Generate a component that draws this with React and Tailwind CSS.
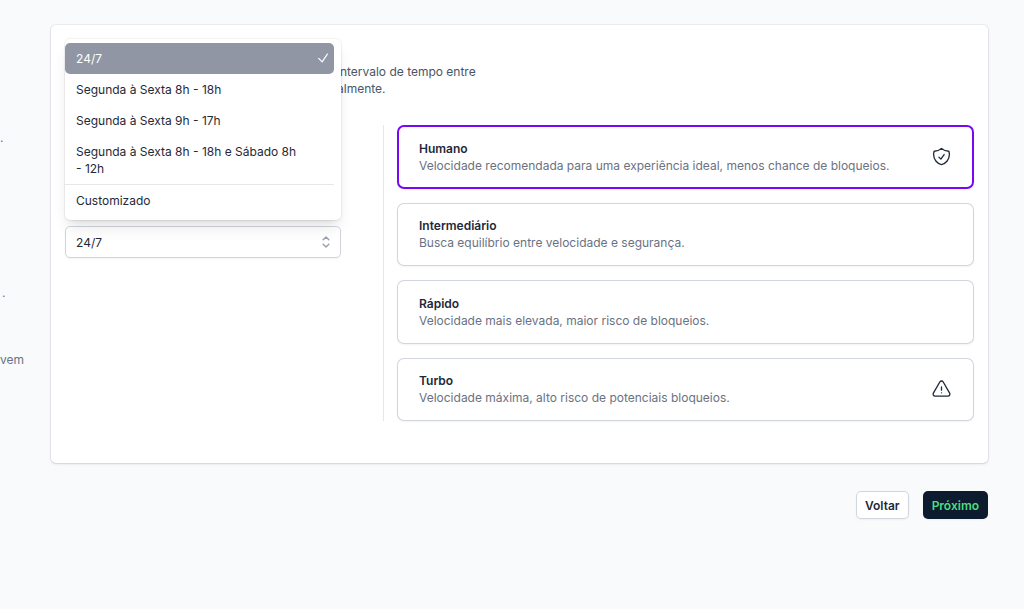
import React, { useState } from "react";
import {
  HiOutlineCheck,
  HiOutlineChevronUpDown,
  HiOutlineExclamationTriangle,
  HiOutlineShieldCheck,
} from "react-icons/hi2";

const schedules = [
  "24/7",
  "Segunda à Sexta 8h - 18h",
  "Segunda à Sexta 9h - 17h",
  "Segunda à Sexta 8h - 18h e Sábado 8h - 12h",
  "Customizado",
];

const speeds = [
  {
    id: "humano",
    title: "Humano",
    description:
      "Velocidade recomendada para uma experiência ideal, menos chance de bloqueios.",
    Icon: HiOutlineShieldCheck,
  },
  {
    id: "intermediario",
    title: "Intermediário",
    description: "Busca equilíbrio entre velocidade e segurança.",
  },
  {
    id: "rapido",
    title: "Rápido",
    description: "Velocidade mais elevada, maior risco de bloqueios.",
  },
  {
    id: "turbo",
    title: "Turbo",
    description: "Velocidade máxima, alto risco de potenciais bloqueios.",
    Icon: HiOutlineExclamationTriangle,
  },
];

function ScheduleSelect() {
  const [open, setOpen] = useState(true);
  const [value, setValue] = useState("24/7");

  function choose(item) {
    setValue(item);
    setOpen(false);
  }

  return (
    <div className="relative">
      <select
        aria-label="Horário"
        value={value}
        onChange={(e) => choose(e.target.value)}
        onMouseDown={(e) => {
          e.preventDefault();
          setOpen(!open);
        }}
        className="block h-8 w-full appearance-none rounded-[5px] border border-gray-300 bg-white pr-8 pl-2.5 text-gray-800 shadow-xs"
      >
        {schedules.map((item) => (
          <option key={item}>{item}</option>
        ))}
      </select>
      <HiOutlineChevronUpDown
        strokeWidth={2}
        className="pointer-events-none absolute top-[7px] right-1.5 size-[18px] text-gray-400"
      />

      {open && (
        <ul
          role="listbox"
          aria-label="Horários"
          className="absolute bottom-full left-0 z-10 mb-1.5 w-full rounded-[5px] bg-white py-1 pr-[7px] shadow-lg ring-1 ring-black/5"
        >
          {schedules.map((item) => {
            const selected = item === value;
            return (
              <li
                key={item}
                role="option"
                aria-selected={selected}
                onClick={() => choose(item)}
                className={`relative cursor-default py-[7px] pr-8 pl-[11px] ${
                  selected
                    ? "rounded-[5px] bg-[#9096a4] text-white"
                    : "text-gray-800"
                } ${item === "Customizado" ? "border-t border-gray-200" : ""}`}
              >
                {item}
                {selected && (
                  <HiOutlineCheck
                    strokeWidth={2}
                    className="absolute top-2 right-1 size-3.5"
                  />
                )}
              </li>
            );
          })}
        </ul>
      )}
    </div>
  );
}

function SpeedOption({ speed, checked, onChange }) {
  const { id, title, description, Icon } = speed;
  return (
    <label
      htmlFor={id}
      className={`relative flex items-center justify-between rounded-[7px] bg-white px-[22px] shadow-xs ${
        checked ? "ring-2 ring-inset ring-[#7808f4]" : "ring-1 ring-inset ring-gray-300"
      }`}
    >
      <input
        type="radio"
        id={id}
        name="speed"
        checked={checked}
        onChange={onChange}
        className="sr-only"
      />
      <span>
        <span className="block font-semibold text-gray-800">{title}</span>
        <span className="block text-gray-500">{description}</span>
      </span>
      {Icon && <Icon className="size-[21px] shrink-0 text-gray-800" />}
    </label>
  );
}

export default function App() {
  const [speed, setSpeed] = useState("humano");

  return (
    <div className="flex min-h-screen overflow-hidden bg-[#f8fafc] font-['Inter',sans-serif] text-[12px] leading-[17px]">
      <aside className="w-[51px] shrink-0 pt-[129px] text-gray-500">
        <p>.</p>
        <p className="mt-[138px] ml-0.5">.</p>
        <p className="mt-[50px]">vem</p>
      </aside>

      <main className="mr-9 min-w-0 grow pt-[25px]">
        <section className="rounded-[5px] bg-white px-3.5 pt-[38px] pb-[42px] shadow-sm ring-1 ring-gray-900/5">
          <p className="ml-[272px] text-gray-600">
            intervalo de tempo entre
            <br />
            almente.
          </p>

          <div className="mt-7 flex min-h-[296px]">
            <div className="w-[276px] shrink-0 pt-[101px]">
              <ScheduleSelect />
            </div>
            <div className="ml-[42px] grid grow grid-rows-4 gap-3.5 border-l border-gray-200 pl-[13px]">
              {speeds.map((item) => (
                <SpeedOption
                  key={item.id}
                  speed={item}
                  checked={speed === item.id}
                  onChange={() => setSpeed(item.id)}
                />
              ))}
            </div>
          </div>
        </section>

        <div className="mt-7 flex justify-end gap-3.5">
          <button
            type="button"
            className="h-7 rounded-[5px] bg-white px-[9px] font-semibold text-gray-800 shadow-xs ring-1 ring-inset ring-gray-300"
          >
            Voltar
          </button>
          <button
            type="button"
            className="h-7 rounded-[5px] bg-[#0d1b2e] px-[9px] font-semibold text-[#4ade80] shadow-xs"
          >
            Próximo
          </button>
        </div>
      </main>
    </div>
  );
}
